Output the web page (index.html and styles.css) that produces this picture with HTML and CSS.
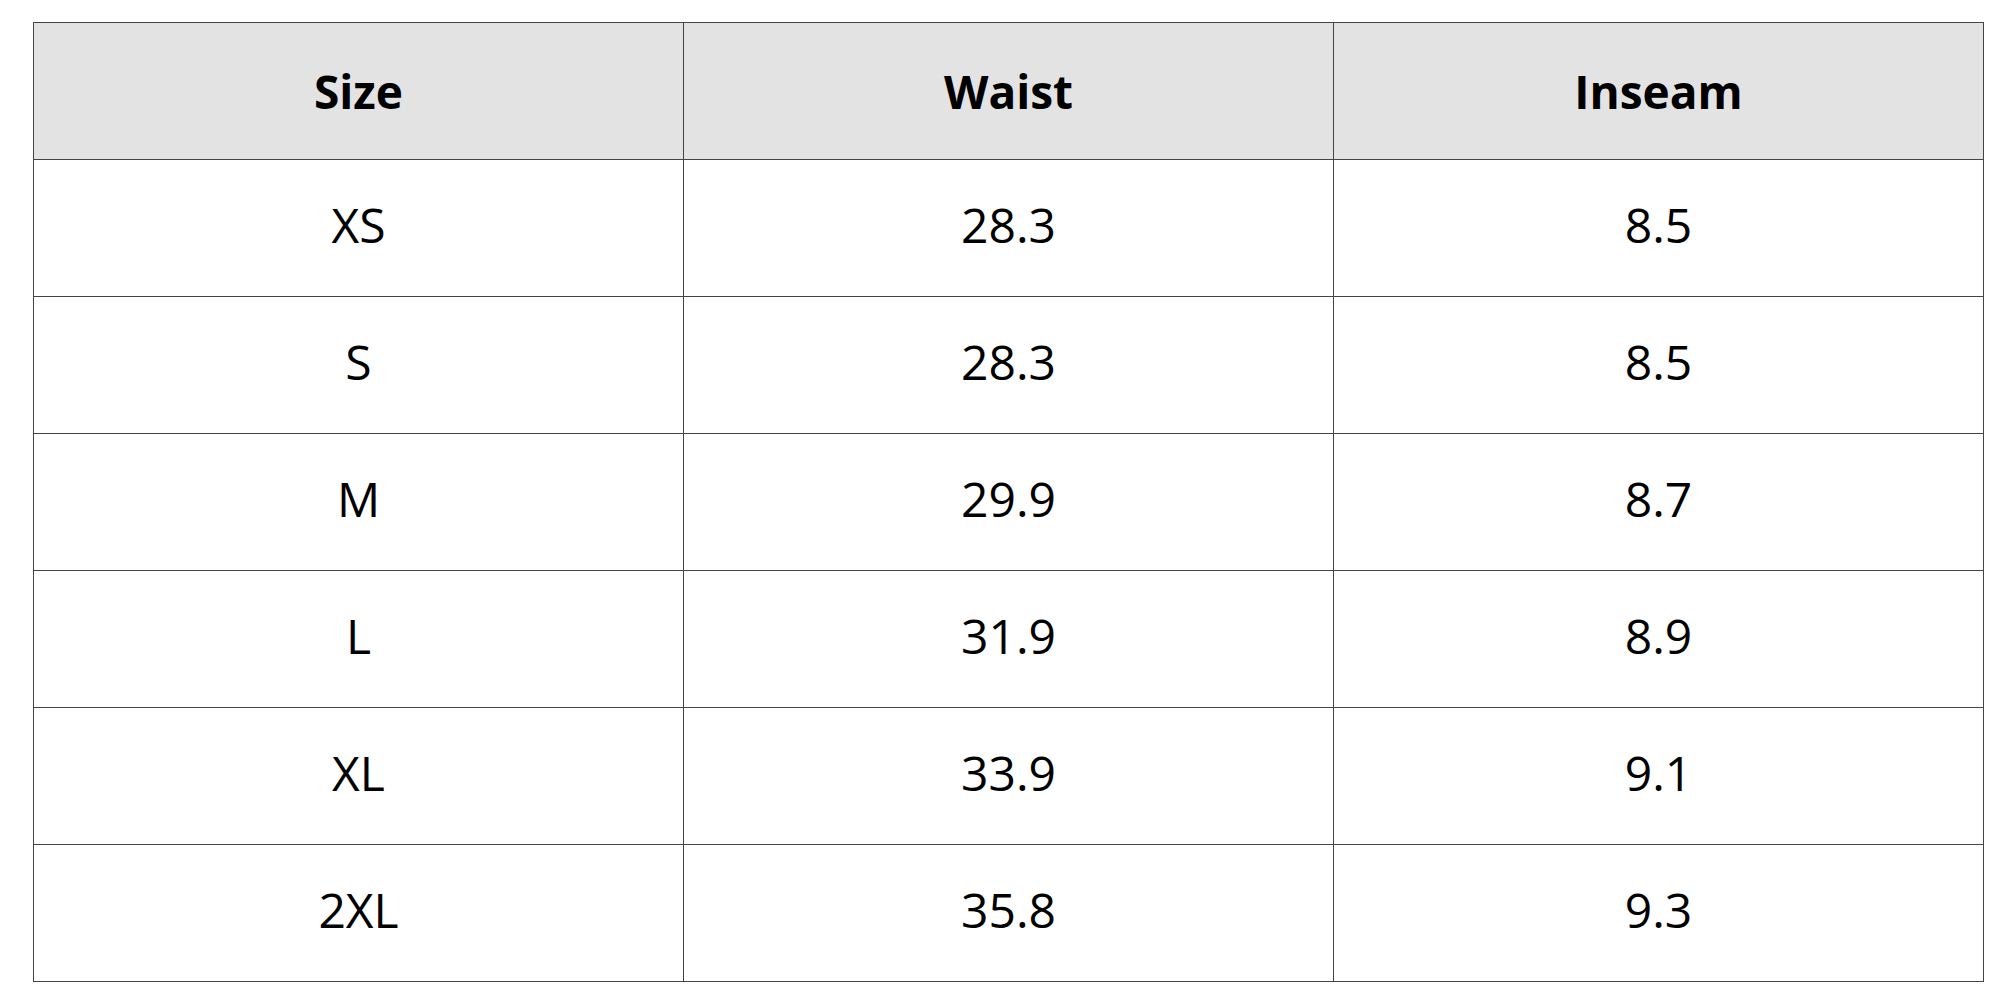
FILE: index.html
```html
<!DOCTYPE html>
<html>
<head>
<meta charset="utf-8">
<link rel="stylesheet" href="styles.css">
</head>
<body>
<table class="size-table">
  <thead>
    <tr><th>Size</th><th>Waist</th><th>Inseam</th></tr>
  </thead>
  <tbody>
    <tr><td>XS</td><td>28.3</td><td>8.5</td></tr>
    <tr><td>S</td><td>28.3</td><td>8.5</td></tr>
    <tr><td>M</td><td>29.9</td><td>8.7</td></tr>
    <tr><td>L</td><td>31.9</td><td>8.9</td></tr>
    <tr><td>XL</td><td>33.9</td><td>9.1</td></tr>
    <tr><td>2XL</td><td>35.8</td><td>9.3</td></tr>
  </tbody>
</table>
</body>
</html>
```
FILE: styles.css
```css
html, body {
  margin: 0;
  padding: 0;
  background: #ffffff;
}
body {
  padding: 22px 0 0 33px;
  font-family: "Open Sans", "Liberation Sans", sans-serif;
  color: #000;
}
.size-table {
  border-collapse: collapse;
  table-layout: fixed;
  width: 1951px;
}
.size-table th,
.size-table td {
  border: 1px solid #444444;
  height: 137px;
  padding: 0;
  text-align: center;
  vertical-align: middle;
  box-sizing: border-box;
}
.size-table th {
  background: #e3e3e3;
  font-weight: 700;
  font-size: 46px;
}
.size-table td {
  font-weight: 400;
  font-size: 48px;
  padding-bottom: 7px;
}
```
